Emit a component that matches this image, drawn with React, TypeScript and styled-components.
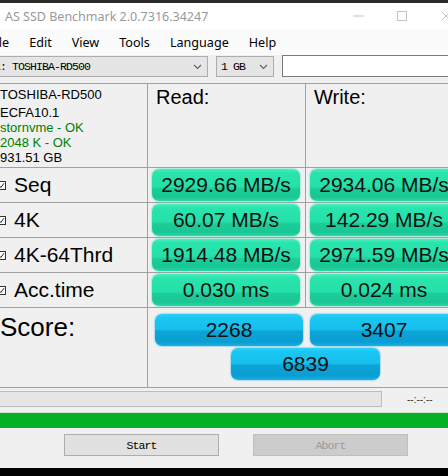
import React from 'react';
import styled, { createGlobalStyle } from 'styled-components';

const GlobalStyle = createGlobalStyle`
  html, body {
    margin: 0;
    padding: 0;
    background: #f0f0f0;
    overflow: hidden;
  }
  body {
    width: 448px;
    height: 476px;
    font-family: "Liberation Sans", Arial, sans-serif;
  }
`;

// the capture cuts off the left edge of the window
const Window = styled.div`
  margin-left: -14px;
  width: 482px;
  background: #f0f0f0;
`;

const TopStrip = styled.div`
  height: 3px;
  background: #2b2b2b;
`;

const TitleBar = styled.div`
  height: 26px;
  display: flex;
  align-items: center;
  background: #ffffff;
  padding-left: 19px;
`;

const Title = styled.div`
  flex: 1;
  font-family: "Noto Sans", sans-serif;
  font-size: 12.5px;
  color: #999999;
`;

const WinButton = styled.div`
  width: 44px;
  height: 26px;
  display: flex;
  align-items: center;
  justify-content: center;
`;

const MenuBar = styled.div`
  height: 26px;
  display: flex;
  align-items: center;
  gap: 20px;
  padding-left: 3px;
  background: #fbfbfb;
  font-family: "Noto Sans", sans-serif;
  font-size: 12.6px;
  color: #000;
`;

const MenuItem = styled.span``;

const Toolbar = styled.div`
  height: 28px;
  box-sizing: border-box;
  display: flex;
  gap: 8px;
  padding: 1px 0 0 3px;
`;

const Combo = styled.div<{ $width: number }>`
  width: ${(p) => p.$width}px;
  height: 21px;
  box-sizing: border-box;
  border: 1px solid #adadad;
  background: #e5e5e5;
  display: flex;
  align-items: center;
  justify-content: space-between;
  padding: 0 5px 0 4px;
  font-family: "Liberation Mono", monospace;
  font-size: 11.5px;
  letter-spacing: -0.9px;
  color: #000;
`;

const TextBox = styled.div`
  flex: 1;
  height: 22px;
  margin-top: -1px;
  box-sizing: border-box;
  border: 1px solid #7a7a7a;
  background: #ffffff;
`;

const Grid = styled.div`
  display: grid;
  grid-template-columns: 161px 157px 157px;
  grid-template-rows: 83px 34px 34px 34px 34px 79px;
  gap: 1px;
  padding: 1px 1px 1px 0;
  width: max-content;
  background: #a0a0a0;
`;

const Cell = styled.div`
  background: #f0f0f0;
  box-sizing: border-box;
`;

const InfoCell = styled(Cell)`
  padding: 3px 0 0 14px;
  font-size: 13px;
  line-height: 15px;
  color: #000;
`;

const InfoLine = styled.div<{ $ok?: boolean; $first?: boolean }>`
  color: ${(p) => (p.$ok ? '#008000' : '#000')};
  margin-bottom: ${(p) => (p.$first ? '3px' : '0')};
`;

const HeadCell = styled(Cell)`
  padding: 2px 0 0 8px;
  font-size: 20px;
  color: #000;
`;

const LabelCell = styled(Cell)`
  display: flex;
  align-items: center;
  gap: 8px;
  padding-left: 11px;
  font-size: 21px;
  color: #000;
`;

const ValueCell = styled(Cell)`
  padding: 1px 4px;
`;

const ValueBox = styled.div`
  width: 148px;
  height: 32px;
  border-radius: 7px;
  display: flex;
  align-items: center;
  justify-content: center;
  font-size: 21px;
  color: #111;
  background: linear-gradient(
    to bottom,
    #48efc0 0%,
    #2ae4ad 12%,
    #26e0a9 55%,
    #1ccd99 62%,
    #19c794 88%,
    #28d8a6 100%
  );
  box-shadow: 0 0 1px 1px rgba(90, 225, 185, 0.45);
`;

const ScoreLabelCell = styled(Cell)`
  padding: 4px 0 0 14px;
  font-size: 26px;
  color: #000;
`;

const ScoreCell = styled(Cell)`
  grid-column: span 2;
  display: flex;
  flex-direction: column;
  padding-top: 6px;
`;

const ScorePair = styled.div`
  display: grid;
  grid-template-columns: 148px 148px;
  column-gap: 7px;
  margin-left: 7px;
`;

const ScoreBox = styled.div`
  width: 148px;
  height: 32px;
  border-radius: 7px;
  display: flex;
  align-items: center;
  justify-content: center;
  font-size: 21px;
  color: #111;
  background: linear-gradient(
    to bottom,
    #2ad2f8 0%,
    #1ac6f2 12%,
    #16bfee 48%,
    #0ca4d7 54%,
    #0a9ed2 88%,
    #18b2e2 100%
  );
  box-shadow: 0 0 1px 1px rgba(80, 190, 235, 0.4);
`;

const TotalBox = styled(ScoreBox)`
  align-self: center;
  margin-top: 2px;
  width: 149px;
`;

const ProgressRow = styled.div`
  display: flex;
  align-items: center;
  margin-top: 3px;
  height: 16px;
`;

const ProgressTrack = styled.div`
  width: 396px;
  height: 16px;
  box-sizing: border-box;
  border: 1px solid #bcbcbc;
  background: #e6e6e6;
`;

const Timer = styled.div`
  margin-left: 25px;
  font-size: 10px;
  color: #333;
`;

const GreenBar = styled.div`
  margin-top: 6px;
  height: 15px;
  background: #06b025;
  box-shadow: 0 -1px 0 #c6e4cb;
`;

const ButtonRow = styled.div`
  display: flex;
  gap: 34px;
  margin-top: 6px;
  padding-left: 78px;
`;

const Button = styled.div<{ $disabled?: boolean }>`
  width: 155px;
  height: 22px;
  box-sizing: border-box;
  display: flex;
  align-items: center;
  justify-content: center;
  border: 1px solid ${(p) => (p.$disabled ? '#bfbfbf' : '#adadad')};
  background: ${(p) => (p.$disabled ? '#cccccc' : '#e1e1e1')};
  color: ${(p) => (p.$disabled ? '#9a9a9a' : '#000')};
  font-family: "Liberation Mono", monospace;
  font-size: 11.5px;
  letter-spacing: -0.9px;
`;

const BottomStrip = styled.div`
  margin-top: 12px;
  height: 20px;
  background: #000;
`;

const Chevron = () => (
  <svg width="9" height="6" viewBox="0 0 9 6">
    <polyline points="1,1 4.5,4.5 8,1" fill="none" stroke="#606060" strokeWidth="1.1" />
  </svg>
);

const Check = () => (
  <svg width="9" height="9" viewBox="0 0 9 9">
    <rect x="0.5" y="0.5" width="8" height="8" fill="#fff" stroke="#333" />
    <polyline points="2,4.5 3.8,6.5 7,2.2" fill="none" stroke="#222" strokeWidth="1" />
  </svg>
);

const rows = [
  { label: 'Seq', read: '2929.66 MB/s', write: '2934.06 MB/s' },
  { label: '4K', read: '60.07 MB/s', write: '142.29 MB/s' },
  { label: '4K-64Thrd', read: '1914.48 MB/s', write: '2971.59 MB/s' },
  { label: 'Acc.time', read: '0.030 ms', write: '0.024 ms' },
];

export default function App() {
  return (
    <>
      <GlobalStyle />
      <Window>
        <TopStrip />
        <TitleBar>
          <Title>AS SSD Benchmark 2.0.7316.34247</Title>
          <WinButton>
            <svg width="11" height="2" viewBox="0 0 11 2">
              <rect x="0" y="0.5" width="11" height="1" fill="#c2c2c2" />
            </svg>
          </WinButton>
          <WinButton>
            <svg width="10" height="10" viewBox="0 0 10 10">
              <rect x="0.5" y="0.5" width="9" height="9" fill="none" stroke="#c2c2c2" />
            </svg>
          </WinButton>
          <WinButton>
            <svg width="10" height="10" viewBox="0 0 10 10">
              <path d="M0.5 0.5 L9.5 9.5 M9.5 0.5 L0.5 9.5" stroke="#c2c2c2" strokeWidth="1" />
            </svg>
          </WinButton>
        </TitleBar>
        <MenuBar>
          <MenuItem>File</MenuItem>
          <MenuItem>Edit</MenuItem>
          <MenuItem>View</MenuItem>
          <MenuItem>Tools</MenuItem>
          <MenuItem>Language</MenuItem>
          <MenuItem>Help</MenuItem>
        </MenuBar>
        <Toolbar>
          <Combo $width={219}>
            <span>1: TOSHIBA-RD500</span>
            <Chevron />
          </Combo>
          <Combo $width={58}>
            <span>1 GB</span>
            <Chevron />
          </Combo>
          <TextBox />
        </Toolbar>
        <Grid>
          <InfoCell>
            <InfoLine $first>TOSHIBA-RD500</InfoLine>
            <InfoLine>ECFA10.1</InfoLine>
            <InfoLine $ok>stornvme - OK</InfoLine>
            <InfoLine $ok>2048 K - OK</InfoLine>
            <InfoLine>931.51 GB</InfoLine>
          </InfoCell>
          <HeadCell>Read:</HeadCell>
          <HeadCell>Write:</HeadCell>
          {rows.map((r) => (
            <React.Fragment key={r.label}>
              <LabelCell>
                <Check />
                <span>{r.label}</span>
              </LabelCell>
              <ValueCell>
                <ValueBox>{r.read}</ValueBox>
              </ValueCell>
              <ValueCell>
                <ValueBox>{r.write}</ValueBox>
              </ValueCell>
            </React.Fragment>
          ))}
          <ScoreLabelCell>Score:</ScoreLabelCell>
          <ScoreCell>
            <ScorePair>
              <ScoreBox>2268</ScoreBox>
              <ScoreBox>3407</ScoreBox>
            </ScorePair>
            <TotalBox>6839</TotalBox>
          </ScoreCell>
        </Grid>
        <ProgressRow>
          <ProgressTrack />
          <Timer>--:--:--</Timer>
        </ProgressRow>
        <GreenBar />
        <ButtonRow>
          <Button>Start</Button>
          <Button $disabled>Abort</Button>
        </ButtonRow>
        <BottomStrip />
      </Window>
    </>
  );
}
